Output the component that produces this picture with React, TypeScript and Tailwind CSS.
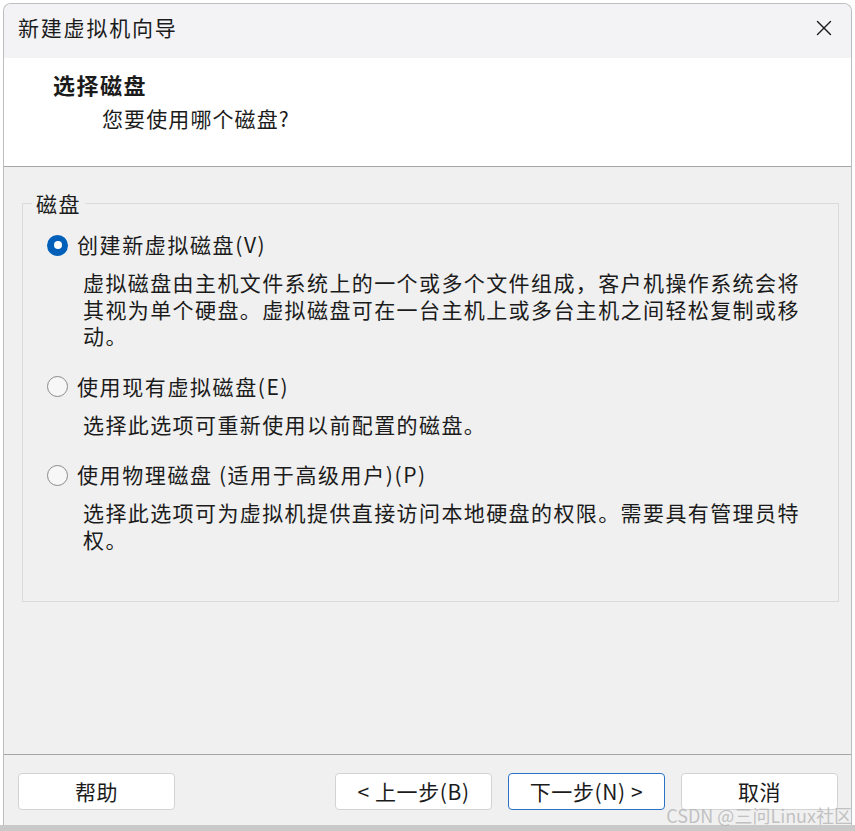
import { X } from "lucide-react";

const font = { fontFamily: '"Noto Sans CJK SC", "Noto Sans", sans-serif' };

function Radio({ checked }: { checked?: boolean }) {
  if (checked) {
    return (
      <span className="flex h-[21px] w-[21px] shrink-0 items-center justify-center rounded-full bg-[#005fb8]">
        <span className="h-[8px] w-[8px] rounded-full bg-white" />
      </span>
    );
  }
  return <span className="h-[21px] w-[21px] shrink-0 rounded-full border-[1.5px] border-[#8a8a8a] bg-[#f7f7f7]" />;
}

interface OptionProps {
  checked?: boolean;
  label: string;
  lines: string[];
}

function Option({ checked, label, lines }: OptionProps) {
  return (
    <div className="flex flex-col">
      <div className="flex h-[26px] items-center gap-[9px]">
        <Radio checked={checked} />
        <span className="tracking-[1.6px]">{label}</span>
      </div>
      <div className="mt-[11px] pl-[36px] tracking-[1.4px] leading-[26.5px]">
        {lines.map((l) => (
          <div key={l}>{l}</div>
        ))}
      </div>
    </div>
  );
}

function Button({ children, primary }: { children: React.ReactNode; primary?: boolean }) {
  return (
    <button
      className={`flex h-[37px] w-[157px] items-center justify-center rounded-[4px] bg-white text-[21px] tracking-[0.6px] text-[#1b1b1b] ${
        primary ? "border-[1.5px] border-[#2b72c4]" : "border border-[#d3d3d3]"
      }`}
    >
      {children}
    </button>
  );
}

export default function App() {
  return (
    <div className="relative flex h-[831px] w-[855px] flex-col bg-white text-[21px] text-[#1b1b1b]" style={font}>
      <div className="ml-[3px] mt-[3px] flex h-[822px] w-[849px] flex-col overflow-hidden rounded-t-[8px] border border-b-0 border-[#bdbdbd] bg-[#f0f0f0]">
        {/* title bar */}
        <div className="flex h-[54px] shrink-0 items-center justify-between bg-[#f3f3f6] pb-[6px] pl-[14px] pr-[14px]">
          <span className="text-[21px] tracking-[1.8px]">新建虚拟机向导</span>
          <X size={26} strokeWidth={1.3} className="text-[#1b1b1b]" />
        </div>

        {/* header */}
        <div className="flex h-[109px] shrink-0 flex-col border-b border-[#a6a6a6] bg-white">
          <div className="mt-[13px] pl-[49px] text-[22px] font-bold leading-[26px] tracking-[1.5px]">选择磁盘</div>
          <div className="mt-[8px] pl-[98px] leading-[26px] tracking-[1.1px]">您要使用哪个磁盘?</div>
        </div>

        {/* body */}
        <div className="flex flex-1 flex-col">
          <div className="relative ml-[18px] mr-[12px] mt-[36px] h-[399px] border border-[#dadada] pl-[24px] pt-[28px]">
            <span className="absolute left-[9px] top-[-14px] bg-[#f0f0f0] px-[4px] leading-[26px] tracking-[1.4px]">磁盘</span>
            <div className="flex flex-col gap-[25px]">
              <Option
                checked
                label="创建新虚拟磁盘(V)"
                lines={[
                  "虚拟磁盘由主机文件系统上的一个或多个文件组成，客户机操作系统会将",
                  "其视为单个硬盘。虚拟磁盘可在一台主机上或多台主机之间轻松复制或移",
                  "动。",
                ]}
              />
              <Option label="使用现有虚拟磁盘(E)" lines={["选择此选项可重新使用以前配置的磁盘。"]} />
              <Option
                label="使用物理磁盘 (适用于高级用户)(P)"
                lines={["选择此选项可为虚拟机提供直接访问本地硬盘的权限。需要具有管理员特", "权。"]}
              />
            </div>
          </div>
        </div>

        {/* footer */}
        <div className="flex h-[71px] shrink-0 items-start border-t border-[#a6a6a6] pl-[14px] pr-[13px] pt-[18px]">
          <Button>帮助</Button>
          <div className="ml-auto flex gap-[16px]">
            <Button>&lt; 上一步(B)</Button>
            <Button primary>下一步(N) &gt;</Button>
            <Button>取消</Button>
          </div>
        </div>
      </div>
      <div className="flex-1 bg-[#c9c9c9]" />

      <span className="absolute bottom-[5px] right-[3px] text-[18px] leading-[22px] text-[#b4b4b4]/80">
        CSDN @三问Linux社区
      </span>
    </div>
  );
}
